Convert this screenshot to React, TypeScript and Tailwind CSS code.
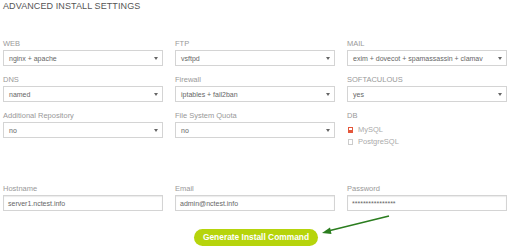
const font = { fontFamily: '"Liberation Sans", Arial, sans-serif' }

interface SelectField {
  label: string
  value: string
}

const ROWS: SelectField[][] = [
  [
    { label: 'WEB', value: 'nginx + apache' },
    { label: 'FTP', value: 'vsftpd' },
    { label: 'MAIL', value: 'exim + dovecot + spamassassin + clamav' },
  ],
  [
    { label: 'DNS', value: 'named' },
    { label: 'Firewall', value: 'iptables + fail2ban' },
    { label: 'SOFTACULOUS', value: 'yes' },
  ],
  [
    { label: 'Additional Repository', value: 'no' },
    { label: 'File System Quota', value: 'no' },
  ],
]

function Label({ children }: { children: React.ReactNode }) {
  return <div className="h-[9px] text-[7.5px] leading-[9px] text-[#999] mb-[2px] whitespace-nowrap">{children}</div>
}

function Select({ label, value }: SelectField) {
  return (
    <div>
      <Label>{label}</Label>
      <div className="h-[16px] flex items-center justify-between border border-[#d4d4d4] bg-white pl-[5px] pr-[4px]">
        <span className="text-[7px] leading-[9px] text-[#666] whitespace-nowrap">{value}</span>
        <span className="w-0 h-0 border-l-[2px] border-r-[2px] border-t-[3px] border-l-transparent border-r-transparent border-t-[#666]" />
      </div>
    </div>
  )
}

function Input({ label, value }: SelectField) {
  return (
    <div>
      <Label>{label}</Label>
      <div className="h-[16px] flex items-center border border-[#d4d4d4] bg-white pl-[4px] shadow-[inset_0_1px_1px_rgba(0,0,0,0.08)]">
        <span className="text-[7px] leading-[9px] text-[#666] whitespace-nowrap">{value}</span>
      </div>
    </div>
  )
}

export default function App() {
  return (
    <div className="relative w-[512px] h-[250px] bg-white overflow-hidden pl-[3px] pr-[5px]" style={font}>
      <h1 className="pt-[1px] text-[9px] leading-[11px] text-[#555] tracking-[0.1px]">ADVANCED INSTALL SETTINGS</h1>

      <div className="mt-[27px] grid grid-cols-3 gap-x-[12px] gap-y-[9px]">
        {ROWS[0].map(f => <Select key={f.label} {...f} />)}
        {ROWS[1].map(f => <Select key={f.label} {...f} />)}
        {ROWS[2].map(f => <Select key={f.label} {...f} />)}
        <div>
          <Label>DB</Label>
          <div className="flex flex-col gap-[3px] pt-[3px] pl-[1px]">
            <div className="flex items-center gap-[5px] h-[9px]">
              <span className="w-[5px] h-[6px] bg-[#e4573b] flex items-start justify-center pt-[1px]">
                <span className="w-[3px] h-[2px] bg-white" />
              </span>
              <span className="text-[7.5px] leading-[9px] text-[#aaa]">MySQL</span>
            </div>
            <div className="flex items-center gap-[5px] h-[9px]">
              <span className="w-[5px] h-[6px] border border-[#ccc] bg-white" />
              <span className="text-[7.5px] leading-[9px] text-[#aaa]">PostgreSQL</span>
            </div>
          </div>
        </div>
      </div>

      <div className="mt-[38px] grid grid-cols-3 gap-x-[12px]">
        <Input label="Hostname" value="server1.nctest.info" />
        <Input label="Email" value="admin@nctest.info" />
        <Input label="Password" value="****************" />
      </div>

      <div className="mt-[18px] flex justify-center pl-[2px]">
        <button className="h-[17px] w-[124px] rounded-full bg-[#b6d40c] text-white text-[8.4px] font-bold leading-none">
          Generate Install Command
        </button>
      </div>

      <svg className="absolute left-[318px] top-[212px]" width="76" height="26" viewBox="0 0 76 26">
        <line x1="71" y1="4" x2="8" y2="19.5" stroke="#2b7d1f" strokeWidth="1.6" />
        <polygon points="4,21 12,15.5 13.5,22" fill="#2b7d1f" />
      </svg>
    </div>
  )
}
